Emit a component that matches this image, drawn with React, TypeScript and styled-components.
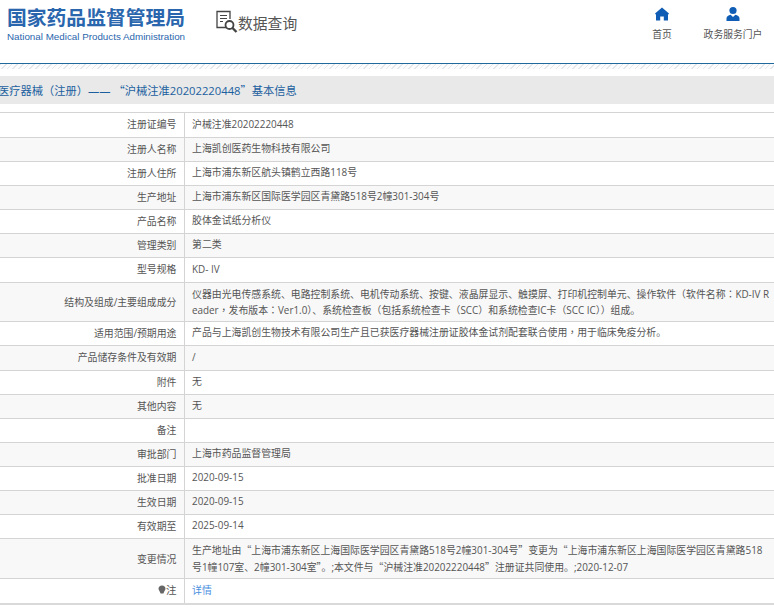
import React from "react";
import styled, { createGlobalStyle } from "styled-components";

const GlobalStyle = createGlobalStyle`
  html, body {
    margin: 0;
    padding: 0;
    background: #fff;
    overflow: hidden;
  }
  body {
    font-family: "Open Sans", "Noto Sans CJK SC", sans-serif;
  }
`;

type Row = { label: string; lines: string[]; height: number };

const rows: Row[] = [
  { label: "注册证编号", lines: ["沪械注准20202220448"], height: 25 },
  { label: "注册人名称", lines: ["上海凯创医药生物科技有限公司"], height: 24 },
  { label: "注册人住所", lines: ["上海市浦东新区航头镇鹤立西路118号"], height: 24 },
  { label: "生产地址", lines: ["上海市浦东新区国际医学园区青黛路518号2幢301-304号"], height: 24 },
  { label: "产品名称", lines: ["胶体金试纸分析仪"], height: 24 },
  { label: "管理类别", lines: ["第二类"], height: 24 },
  { label: "型号规格", lines: ["KD- IV"], height: 25 },
  {
    label: "结构及组成/主要组成成分",
    lines: [
      "仪器由光电传感系统、电路控制系统、电机传动系统、按键、液晶屏显示、触摸屏、打印机控制单元、操作软件（软件名称：KD-IV R",
      "eader，发布版本：Ver1.0）、系统检查板（包括系统检查卡（SCC）和系统检查IC卡（SCC IC））组成。",
    ],
    height: 39,
  },
  { label: "适用范围/预期用途", lines: ["产品与上海凯创生物技术有限公司生产且已获医疗器械注册证胶体金试剂配套联合使用，用于临床免疫分析。"], height: 24 },
  { label: "产品储存条件及有效期", lines: ["/"], height: 25 },
  { label: "附件", lines: ["无"], height: 24 },
  { label: "其他内容", lines: ["无"], height: 24 },
  { label: "备注", lines: [""], height: 24 },
  { label: "审批部门", lines: ["上海市药品监督管理局"], height: 24 },
  { label: "批准日期", lines: ["2020-09-15"], height: 24 },
  { label: "生效日期", lines: ["2020-09-15"], height: 24 },
  { label: "有效期至", lines: ["2025-09-14"], height: 24 },
  {
    label: "变更情况",
    lines: [
      "生产地址由“上海市浦东新区上海国际医学园区青黛路518号2幢301-304号”变更为“上海市浦东新区上海国际医学园区青黛路518",
      "号1幢107室、2幢301-304室”。;本文件与“沪械注准20202220448”注册证共同使用。;2020-12-07",
    ],
    height: 40,
  },
];

// full width punctuation, Open Sans would otherwise take the quotes
const withPunct = (text: string) =>
  text.split(/([（）：，“”、。])/).map((part, i) =>
    i % 2 === 1 ? (
      <Punct key={i} $centered={"（）：，".includes(part)}>
        {part}
      </Punct>
    ) : (
      part
    )
  );

const App = () => {
  return (
    <Page>
      <GlobalStyle />
      <Header>
        <Logo>
          <LogoTitle>国家药品监督管理局</LogoTitle>
          <LogoSub>National Medical Products Administration</LogoSub>
        </Logo>
        <Section>
          <svg width="24" height="24" viewBox="0 0 24 24" fill="none" stroke="#444">
            <path d="M11 17.5H2V1.5H15V9" strokeWidth="1.3" />
            <path d="M5 5.5H12M5 8.5H12M5 11.5H8" strokeWidth="1.2" />
            <circle cx="14.5" cy="15" r="4" strokeWidth="1.8" />
            <path d="M17.5 18L21.5 22" strokeWidth="2.4" />
          </svg>
          <SectionName>数据查询</SectionName>
        </Section>
        <Nav>
          <NavItem $width={40}>
            <svg width="16" height="16" viewBox="0 0 16 16" fill="#0f5db5">
              <path d="M8 1.5L15 7.5L14 8.7V14.5H9.8V10.5H6.2V14.5H2V8.7L1 7.5Z" />
            </svg>
            <NavText>首页</NavText>
          </NavItem>
          <NavItem $width={62}>
            <svg width="16" height="16" viewBox="0 0 16 16" fill="#0f5db5">
              <circle cx="8" cy="4.5" r="3.6" />
              <path d="M1.5 15V12.3C1.5 10.3 3.6 9 5.6 8.7L8 11L10.4 8.7C12.4 9 14.5 10.3 14.5 12.3V15Z" />
            </svg>
            <NavText>政务服务门户</NavText>
          </NavItem>
        </Nav>
      </Header>
      <Hatch />
      <TitleBar>{withPunct("医疗器械（注册）—— “沪械注准20202220448”基本信息")}</TitleBar>
      <InfoTable>
        <tbody>
          {rows.map((row) => (
            <TableRow key={row.label} $height={row.height}>
              <LabelCell>{row.label}</LabelCell>
              <ValueCell>
                {row.lines.map((line, i) => (
                  <ValueLine key={i}>{withPunct(line)}</ValueLine>
                ))}
              </ValueCell>
            </TableRow>
          ))}
          <TableRow $height={25}>
            <LabelCell>
              <svg width="8" height="9" viewBox="0 0 8 9" fill="#666">
                <path d="M4 0.5C6.2 0.5 7.5 2 7.5 3.7C7.5 5.3 6 6 5.5 8.5H2.5C2 6 0.5 5.3 0.5 3.7C0.5 2 1.8 0.5 4 0.5Z" />
              </svg>
              <Note>注</Note>
            </LabelCell>
            <ValueCell>
              <DetailLink>详情</DetailLink>
            </ValueCell>
          </TableRow>
        </tbody>
      </InfoTable>
    </Page>
  );
};

export default App;

const Page = styled.div`
  width: 774px;
  height: 609px;
  overflow: hidden;
`;
const Header = styled.header`
  height: 63px;
  display: flex;
  align-items: flex-start;
  border-bottom: 1px solid #1f6a9c;
  box-sizing: content-box;
`;
const Logo = styled.div`
  width: 178px;
  margin: 4px 0 0 7px;
`;
const LogoTitle = styled.div`
  font-family: "Noto Sans CJK SC", sans-serif;
  font-size: 19.8px;
  font-weight: 700;
  line-height: 25px;
  color: #2a66ad;
  white-space: nowrap;
`;
const LogoSub = styled.div`
  font-family: "Liberation Sans", sans-serif;
  font-size: 9.8px;
  line-height: 12px;
  margin-top: 2px;
  color: #2a66ad;
  white-space: nowrap;
`;
const Section = styled.div`
  display: flex;
  align-items: center;
  margin: 10px 0 0 30px;
`;
const SectionName = styled.span`
  font-family: "Noto Sans CJK SC", sans-serif;
  font-size: 14.8px;
  color: #555;
  margin-left: -1px;
`;
const Nav = styled.nav`
  margin-left: auto;
  display: flex;
  gap: 20px;
  padding: 6px 10px 0 0;
`;
const NavItem = styled.div<{ $width: number }>`
  width: ${(p) => p.$width}px;
  display: flex;
  flex-direction: column;
  align-items: center;
`;
const NavText = styled.span`
  font-family: "Noto Sans CJK SC", sans-serif;
  font-size: 9.8px;
  line-height: 14px;
  margin-top: 5px;
  color: #555;
  white-space: nowrap;
`;
const Hatch = styled.div`
  height: 5px;
  margin-bottom: 7px;
  background: repeating-linear-gradient(135deg, #e3e8ec 0 1px, #fcfcfc 1px 4px);
`;
const TitleBar = styled.div`
  height: 28px;
  line-height: 29px;
  margin-bottom: 8px;
  text-indent: -2px;
  background: #e9e9e9;
  font-size: 11.25px;
  color: #1b5f9f;
  white-space: nowrap;
  overflow: hidden;
`;
const Punct = styled.span<{ $centered?: boolean }>`
  font-family: ${(p) => (p.$centered ? '"Noto Sans CJK TC"' : '"Noto Sans CJK SC"')}, sans-serif;
`;
const InfoTable = styled.table`
  width: 774px;
  border-collapse: collapse;
  table-layout: fixed;
  border-top: 1px solid #d4d4d4;
  border-bottom: 2px solid #d9d9d9;
`;
const TableRow = styled.tr<{ $height: number }>`
  height: ${(p) => p.$height}px;
  border-bottom: 1px solid #d4d4d4;
  &:nth-child(even) {
    background: #f8f8f8;
  }
  &:last-child {
    border-bottom: none;
  }
  & > td {
    padding-bottom: ${(p) => (p.$height < 39 ? 2 : 0)}px;
  }
`;
const LabelCell = styled.td`
  width: 184px;
  box-sizing: border-box;
  padding: 0 7px 0 0;
  border-right: 1px solid #d4d4d4;
  text-align: right;
  font-size: 9.9px;
  line-height: 16px;
  color: #555;
`;
const ValueCell = styled.td`
  padding: 0 0 0 7.5px;
  font-size: 9.9px;
  color: #555;
`;
const ValueLine = styled.div`
  line-height: 16.2px;
  white-space: nowrap;
`;
const DetailLink = styled.span`
  color: #4a8fe0;
`;
const Note = styled.span`
  font-size: 10.5px;
`;
